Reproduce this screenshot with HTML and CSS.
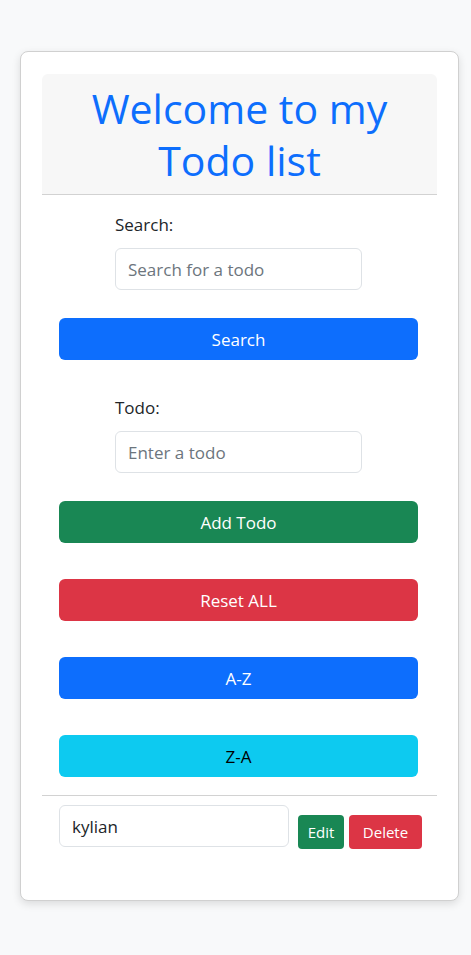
FILE: index.html
```html
<!DOCTYPE html>
<html lang="en">
<head>
<meta charset="utf-8">
<title>Todo list</title>
<link rel="stylesheet" href="styles.css">
</head>
<body>
<div class="card">
  <div class="card-header">
    <h1 class="title">Welcome to my Todo list</h1>
  </div>
  <div class="card-body">
    <div class="field">
      <label class="label" for="search">Search:</label>
      <input class="input" id="search" type="text" placeholder="Search for a todo">
    </div>
    <button class="btn btn-wide btn-primary">Search</button>

    <div class="field field-next">
      <label class="label" for="todo">Todo:</label>
      <input class="input" id="todo" type="text" placeholder="Enter a todo">
    </div>
    <button class="btn btn-wide btn-success">Add Todo</button>

    <button class="btn btn-wide btn-danger btn-gap">Reset ALL</button>
    <button class="btn btn-wide btn-primary btn-gap">A-Z</button>
    <button class="btn btn-wide btn-info btn-gap">Z-A</button>

    <hr class="divider">

    <div class="todo-row">
      <input class="input input-item" type="text" value="kylian">
      <button class="btn btn-sm btn-success btn-edit">Edit</button>
      <button class="btn btn-sm btn-danger btn-delete">Delete</button>
    </div>
  </div>
</div>
</body>
</html>
```

FILE: styles.css
```css
* { box-sizing: border-box; }

html, body {
  margin: 0;
  padding: 0;
}

body {
  background: #f8f9fa;
  font-family: "Open Sans", "Noto Sans", sans-serif;
  font-size: 17px;
  color: #212529;
  padding-top: 51px;
  min-height: 955px;
}

.card {
  margin-left: 20px;
  width: 439px;
  background: #fff;
  border: 1px solid #d0d0d0;
  border-radius: 8px;
  box-shadow: 0 3px 8px rgba(0, 0, 0, 0.12);
  padding: 22px 21px;
}

.card-header {
  background: #f7f7f7;
  border-bottom: 1px solid #d2d2d2;
  border-radius: 6px 6px 0 0;
  padding: 8px 16px;
  text-align: center;
}

.title {
  margin: 0;
  font-size: 41px;
  line-height: 52px;
  font-weight: 400;
  color: #0d6efd;
}

.card-body {
  padding-top: 18px;
  padding-bottom: 29px;
}

.field {
  width: 247px;
  margin: 0 0 28px 73px;
}

.field-next {
  margin-top: 36px;
}

.label {
  display: block;
  line-height: 24px;
  margin-bottom: 11px;
}

.input {
  display: block;
  width: 100%;
  height: 42px;
  padding: 0 12px;
  font: inherit;
  font-size: 17px;
  color: #212529;
  background: #fff;
  border: 1px solid #dee2e6;
  border-radius: 6px;
  outline: none;
}

.input::placeholder {
  color: #6c757d;
  opacity: 1;
}

.btn {
  display: block;
  font-family: inherit;
  border: 0;
  border-radius: 6px;
  color: #fff;
  text-align: center;
  padding: 0;
  cursor: pointer;
}

.btn-wide {
  width: 359px;
  height: 42px;
  margin-left: 17px;
  font-size: 17px;
}

.btn-gap {
  margin-top: 36px;
}

.btn-primary { background: #0d6efd; }
.btn-success { background: #198754; }
.btn-danger  { background: #dc3545; }
.btn-info    { background: #0dcaf0; color: #000; }

.divider {
  margin: 18px 0 0;
  border: 0;
  border-top: 1px solid #d2d2d2;
  height: 0;
}

.todo-row {
  display: flex;
  align-items: flex-start;
  margin-top: 9px;
}

.input-item {
  width: 230px;
  margin-left: 17px;
}

.btn-sm {
  height: 34px;
  margin-top: 10px;
  font-size: 15px;
  border-radius: 4px;
}

.btn-edit {
  width: 46px;
  margin-left: 9px;
}

.btn-delete {
  width: 73px;
  margin-left: 5px;
}
```
